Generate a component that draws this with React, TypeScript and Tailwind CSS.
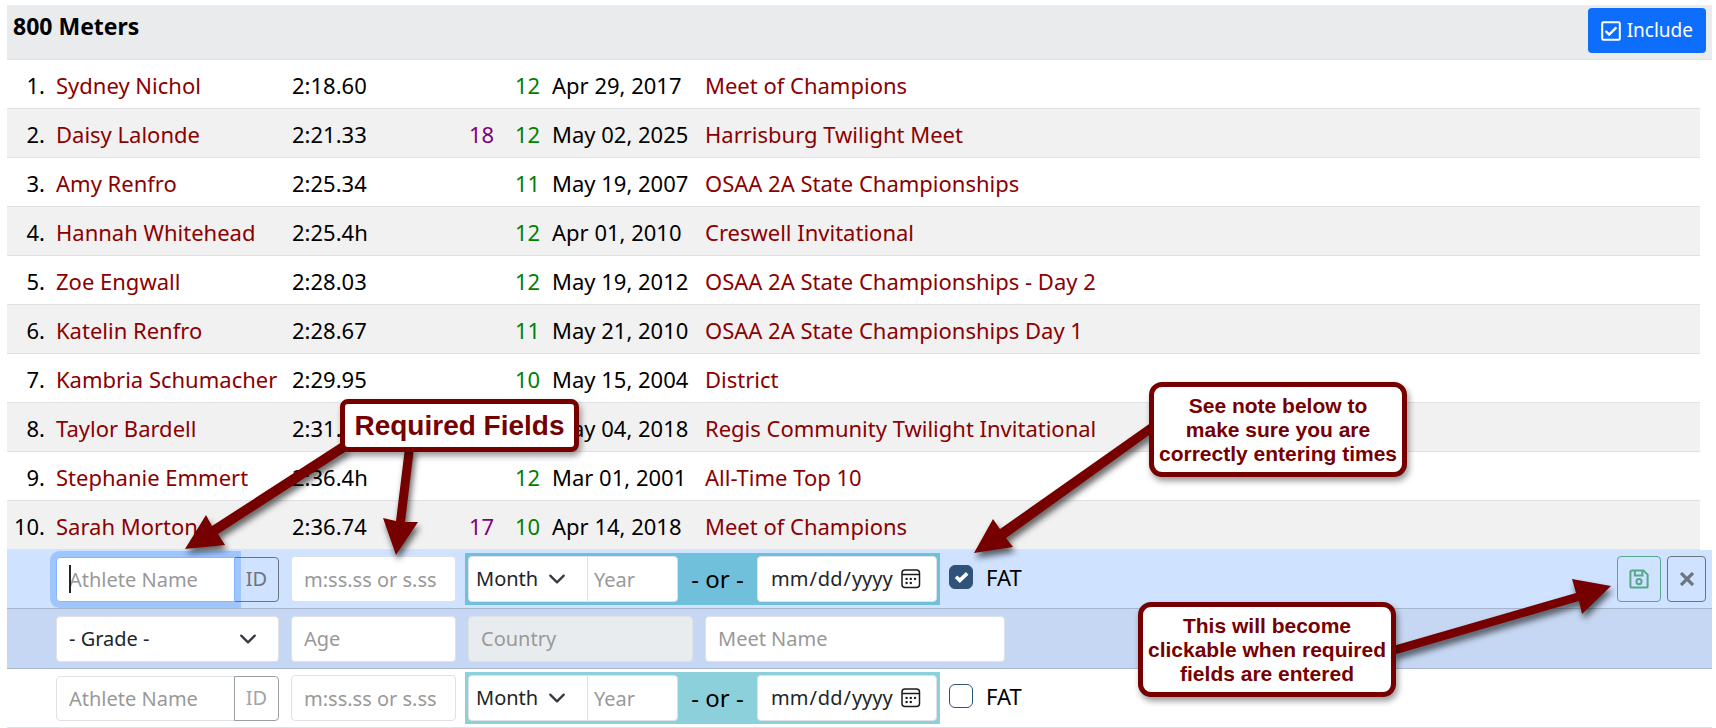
import React from "react";

type Result = {
  name: string;
  time: string;
  age?: number;
  grade: number;
  date: string;
  meet: string;
};

const results: Result[] = [
  { name: "Sydney Nichol", time: "2:18.60", grade: 12, date: "Apr 29, 2017", meet: "Meet of Champions" },
  { name: "Daisy Lalonde", time: "2:21.33", age: 18, grade: 12, date: "May 02, 2025", meet: "Harrisburg Twilight Meet" },
  { name: "Amy Renfro", time: "2:25.34", grade: 11, date: "May 19, 2007", meet: "OSAA 2A State Championships" },
  { name: "Hannah Whitehead", time: "2:25.4h", grade: 12, date: "Apr 01, 2010", meet: "Creswell Invitational" },
  { name: "Zoe Engwall", time: "2:28.03", grade: 12, date: "May 19, 2012", meet: "OSAA 2A State Championships - Day 2" },
  { name: "Katelin Renfro", time: "2:28.67", grade: 11, date: "May 21, 2010", meet: "OSAA 2A State Championships Day 1" },
  { name: "Kambria Schumacher", time: "2:29.95", grade: 10, date: "May 15, 2004", meet: "District" },
  { name: "Taylor Bardell", time: "2:31.14", grade: 11, date: "May 04, 2018", meet: "Regis Community Twilight Invitational" },
  { name: "Stephanie Emmert", time: "2:36.4h", grade: 12, date: "Mar 01, 2001", meet: "All-Time Top 10" },
  { name: "Sarah Morton", time: "2:36.74", age: 17, grade: 10, date: "Apr 14, 2018", meet: "Meet of Champions" },
];

const field =
  "h-[46px] min-w-0 rounded border border-[#dee2e6] bg-white px-3 text-[#212529] outline-none placeholder:text-[#999]";

const cell = "border-b border-[#dee2e6] px-1.5 pt-0.5";

function Chevron() {
  return (
    <svg viewBox="0 0 16 16" className="h-[18px] w-[18px]" fill="none" stroke="#343a40" strokeWidth="2" strokeLinecap="round" strokeLinejoin="round">
      <path d="m2 5 6 6 6-6" />
    </svg>
  );
}

function CalendarIcon() {
  return (
    <svg viewBox="0 0 20 20" className="h-5 w-5" fill="none" stroke="#1b1b1f" strokeWidth="1.5">
      <rect x="1" y="1" width="17.5" height="17.5" rx="3" />
      <path d="M1 5.5h17.5" />
      <g fill="#1b1b1f" stroke="none">
        <circle cx="5.6" cy="9.9" r="1.2" />
        <circle cx="9.8" cy="9.9" r="1.2" />
        <circle cx="14" cy="9.9" r="1.2" />
        <circle cx="5.6" cy="14" r="1.2" />
        <circle cx="9.8" cy="14" r="1.2" />
      </g>
    </svg>
  );
}

function EntryRow({ active }: { active: boolean }) {
  return (
    <div
      className={
        active
          ? "flex h-[59px] items-center gap-3 border-b border-[#a6b5cc] bg-[#cfe2ff] pr-1.5 pl-[49px]"
          : "flex h-[59px] items-center gap-3 border-b border-[#dee2e6] bg-white pr-1.5 pl-[49px]"
      }
    >
      <div className="relative flex w-[223px]">
        <input
          aria-label="Athlete Name"
          placeholder="Athlete Name"
          className={
            active
              ? "relative z-10 h-[45px] w-[179px] rounded-l border border-[#86b7fe] bg-white px-3 text-[#212529] shadow-[0_0_0_6px_rgba(13,110,253,0.25)] outline-none placeholder:text-[#999]"
              : "h-[45px] w-[179px] rounded-l border border-[#dee2e6] bg-white px-3 text-[#212529] outline-none placeholder:text-[#999]"
          }
        />
        {active && <span aria-hidden="true" className="absolute top-2 left-[13px] z-20 h-7 w-0.5 bg-[#212529]" />}
        <button
          type="button"
          className={
            active
              ? "-ml-px h-[45px] flex-1 rounded-r border border-[#6c757d] text-[#6c757d]"
              : "-ml-px h-[45px] flex-1 rounded-r border border-[#989ea4] text-[#a0a5aa]"
          }
        >
          ID
        </button>
      </div>
      <input aria-label="Mark" placeholder="m:ss.ss or s.ss" className={`${field} w-[165px]`} />
      <div className={active ? "-mx-[3px] flex items-center bg-[#71c0db] p-[3px]" : "-mx-[3px] flex items-center bg-[#8bd0da] p-[3px]"}>
        <div className="relative flex items-center">
          <select aria-label="Month" className="h-[46px] w-[120px] appearance-none rounded-l border border-[#dee2e6] bg-white px-[7px] text-[#212529] outline-none">
            <option>Month</option>
          </select>
          <span className="pointer-events-none absolute right-[22px]">
            <Chevron />
          </span>
        </div>
        <input aria-label="Year" placeholder="Year" className="-ml-px h-[46px] w-[91px] rounded-r border border-[#dee2e6] bg-white px-1.5 text-[#212529] outline-none placeholder:text-[#999]" />
        <span className="w-[79px] text-center text-2xl">- or -</span>
        <div className="relative flex items-center">
          <input type="date" aria-label="Date" className={`${field} w-[180px] [&::-webkit-calendar-picker-indicator]:opacity-0`} />
          <span className="pointer-events-none absolute right-4">
            <CalendarIcon />
          </span>
        </div>
      </div>
      <label className="-mt-1 flex items-center gap-[13px] text-[22px]">
        <span className="relative flex">
          <input
            type="checkbox"
            defaultChecked={active}
            className="peer h-6 w-6 appearance-none rounded-md border border-[#2f5278] bg-white checked:bg-[#2f5278]"
          />
          <svg viewBox="0 0 24 24" className="pointer-events-none absolute inset-0 hidden h-6 w-6 peer-checked:block" fill="none" stroke="white" strokeWidth="3.6">
            <path d="m7 11.8 3.8 3.6L18.2 8.4" />
          </svg>
        </span>
        FAT
      </label>
      {active && (
        <div className="ml-auto flex gap-1.5">
          <button type="button" disabled aria-label="Save" className="flex h-[46px] w-11 items-center justify-center rounded border border-[#57a78d] text-[#57a78d]">
            <svg viewBox="0 0 20 20" className="h-5 w-5" fill="none" stroke="currentColor" strokeWidth="2">
              <path d="M3 1.4h11.4l4.2 4.2V17a1.6 1.6 0 0 1-1.6 1.6H3A1.6 1.6 0 0 1 1.4 17V3A1.6 1.6 0 0 1 3 1.4Z" />
              <path d="M5.8 1.4v5h7.6v-5" />
              <circle cx="10" cy="12.6" r="2.6" />
            </svg>
          </button>
          <button type="button" aria-label="Cancel" className="flex h-[46px] w-[39px] items-center justify-center rounded border border-[#6c757d] text-[#6c757d]">
            <svg viewBox="0 0 14 14" className="h-3.5 w-3.5" fill="none" stroke="currentColor" strokeWidth="3.2">
              <path d="m1 1 12 12M13 1 1 13" />
            </svg>
          </button>
        </div>
      )}
    </div>
  );
}

function Annotations() {
  const box =
    "absolute flex items-center justify-center border-[5px] border-[#760000] bg-white text-center whitespace-nowrap font-['Liberation_Sans',sans-serif] font-bold text-[#760000] shadow-[2px_4px_6px_rgba(0,0,0,0.4)]";
  return (
    <div className="pointer-events-none absolute inset-0 overflow-hidden">
      <svg width="1716" height="728" viewBox="0 0 1716 728" fill="#760000" className="absolute top-0 left-0 max-w-none drop-shadow-[2px_5px_3px_rgba(0,0,0,0.6)]">
        <path d="M342 442 212 526 206 515 185 549 225 545 218 534 348 450Z" />
        <path d="M405 448 396 521 383 518 396 555 418 522 405 522 414 448Z" />
        <path d="M1152 422 1000 529 993 519 974 553 1013 547 1006 538 1152 433Z" />
        <path d="M1393 646 1576 593 1572 579 1611 586 1582 614 1579 601 1393 655Z" />
      </svg>
      <div className={`${box} top-[399px] left-[340px] h-[53px] w-[239px] rounded-lg text-[28px]`}>Required Fields</div>
      <div className={`${box} top-[382px] left-[1149px] h-[95px] w-[258px] rounded-[13px] text-[21px] leading-6`}>
        See note below to
        <br />
        make sure you are
        <br />
        correctly entering times
      </div>
      <div className={`${box} top-[602px] left-[1138px] h-[95px] w-[258px] rounded-[13px] text-[21px] leading-6`}>
        This will become
        <br />
        clickable when required
        <br />
        fields are entered
      </div>
    </div>
  );
}

export default function App() {
  return (
    <main className="relative bg-white pt-[5px] pr-1 pl-[7px] font-['Noto_Sans',sans-serif] text-xl text-black">
      <header className="flex h-[55px] items-start justify-between border-b border-[#dee2e6] bg-[#eaebed] pt-[3px] pr-1.5 pl-1.5">
        <h1 className="pt-0.5 text-[23px] leading-[33px] font-bold">800 Meters</h1>
        <button type="button" className="flex h-[45px] items-center gap-1.5 rounded bg-[#0d6efd] px-[13px] text-[19px] text-white">
          <svg viewBox="0 0 20 20" className="h-5 w-5" fill="none" stroke="currentColor" strokeWidth="2">
            <rect x="1.2" y="1.2" width="17.6" height="17.6" rx="1.2" />
            <path d="m4.6 10 3.6 3.6L15.4 6.4" strokeWidth="2.4" />
          </svg>
          Include
        </button>
      </header>
      <div className="pr-3">
        <table className="w-full table-fixed border-separate border-spacing-0 text-[22px]">
          <colgroup>
            <col className="w-[43px]" />
            <col className="w-[236px]" />
            <col className="w-[177px]" />
            <col className="w-[46px]" />
            <col className="w-[37px]" />
            <col className="w-[153px]" />
            <col />
          </colgroup>
          <tbody>
            {results.map((r, i) => (
              <tr key={r.name} className="h-[49px] whitespace-nowrap even:bg-[#f1f1f1]">
                <td className="border-b border-[#dee2e6] pt-0.5 pr-[5px] text-right">{i + 1}.</td>
                <td className={cell}>
                  <a href="#athlete" className="text-[#8b0000]">{r.name}</a>
                </td>
                <td className={cell}>{r.time}</td>
                <td className={`${cell} text-[#800080]`}>{r.age}</td>
                <td className={`${cell} text-[#008000]`}>{r.grade}</td>
                <td className={cell}>{r.date}</td>
                <td className={cell}>
                  <a href="#meet" className="text-[#8b0000]">{r.meet}</a>
                </td>
              </tr>
            ))}
          </tbody>
        </table>
      </div>
      <form>
        <EntryRow active />
        <div className="flex h-[60px] items-center gap-3 border-b border-[#a6b5cc] bg-[#c5d7f2] pr-1.5 pl-[49px]">
          <div className="relative flex w-[223px] items-center">
            <select aria-label="Grade" className={`${field} w-full appearance-none`}>
              <option>- Grade -</option>
            </select>
            <span className="pointer-events-none absolute right-[22px]">
              <Chevron />
            </span>
          </div>
          <input aria-label="Age" placeholder="Age" className={`${field} w-[165px]`} />
          <input
            aria-label="Country"
            placeholder="Country"
            disabled
            className="h-[46px] w-[225px] rounded border border-[#dee2e6] bg-[#e9ecef] px-3 placeholder:text-[#999]"
          />
          <input aria-label="Meet Name" placeholder="Meet Name" className={`${field} w-[300px]`} />
        </div>
        <EntryRow active={false} />
      </form>
      <Annotations />
    </main>
  );
}
